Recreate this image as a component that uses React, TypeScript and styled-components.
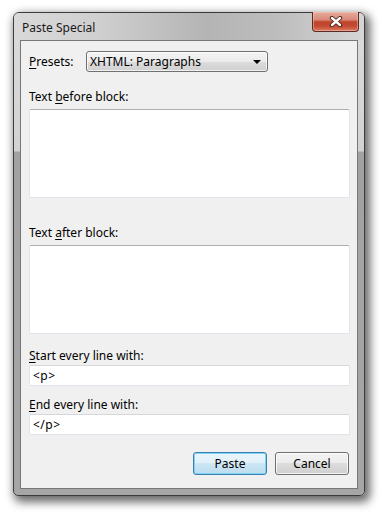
import React from "react";
import { styled, createGlobalStyle } from "styled-components";

const GlobalStyle = createGlobalStyle`
  body {
    margin: 0;
    background: #ffffff;
    font-family: "Noto Sans", "Open Sans", sans-serif;
  }
`;

const Page = styled.div`
  padding: 12px 0 0 13px;
  height: 515px;
  box-sizing: border-box;
`;

const Window = styled.div`
  width: 352px;
  height: 484px;
  box-sizing: border-box;
  border: 1px solid #3c3c3c;
  border-radius: 6px 6px 5px 5px;
  display: flex;
  flex-direction: column;
  background: linear-gradient(to bottom, #dcdcdc 0px, #d2d2d2 138px, #a2a2a2 139px, #a6a6a6 100%);
  box-shadow: 3px 4px 10px 2px rgba(0, 0, 0, 0.6);
`;

const TitleBar = styled.div`
  height: 27px;
  flex: none;
  display: flex;
  align-items: flex-start;
  justify-content: space-between;
  padding: 0 5px 0 8px;
  border-radius: 5px 5px 0 0;
  background: linear-gradient(
    to right,
    #d9d9d9 0%,
    #cfcfcf 25%,
    #b4b4b4 55%,
    #bdbdbd 75%,
    #cbcbcb 90%,
    #d6d6d6 100%
  );
`;

const Title = styled.span`
  font-size: 12px;
  line-height: 16px;
  margin-top: 7px;
  color: #1a1a1a;
`;

const CloseButton = styled.div`
  width: 47px;
  height: 20px;
  margin-top: -1px;
  box-sizing: border-box;
  border: 1px solid #5a2a24;
  border-top: none;
  border-radius: 0 0 4px 4px;
  display: flex;
  align-items: center;
  justify-content: center;
  background: linear-gradient(
    to bottom,
    #e6ab9c 0%,
    #d98a78 40%,
    #c1432d 52%,
    #c44a33 75%,
    #dc7c64 100%
  );
  box-shadow: inset 0 0 0 1px rgba(255, 210, 200, 0.45);
`;

const Client = styled.div`
  flex: 1;
  margin: 0 6px 6px;
  border: 1px solid #777777;
  background: #f0f0f0;
  padding: 10px 6px 0 8px;
  display: flex;
  flex-direction: column;
  color: #000000;
  font-size: 12px;
`;

const PresetRow = styled.div`
  display: flex;
  align-items: center;
  height: 21px;
`;

const Label = styled.div<{ $top: number; $bottom: number }>`
  line-height: 16px;
  height: 16px;
  margin-top: ${(p) => p.$top}px;
  margin-bottom: ${(p) => p.$bottom}px;
  white-space: nowrap;
`;

const PresetLabel = styled.span`
  width: 57px;
  line-height: 16px;
`;

const Key = styled.span`
  text-decoration: underline;
  text-underline-offset: 2px;
`;

const Combo = styled.div`
  width: 182px;
  height: 21px;
  box-sizing: border-box;
  border: 1px solid #707070;
  border-radius: 3px;
  display: flex;
  align-items: center;
  justify-content: space-between;
  padding: 0 6px 0 3px;
  background: linear-gradient(to bottom, #f3f3f3 0%, #ebebeb 50%, #dddddd 50%, #d0d0d0 100%);
  box-shadow: inset 0 0 0 1px rgba(255, 255, 255, 0.7);
`;

const Arrow = styled.span`
  width: 0;
  height: 0;
  border-left: 4px solid transparent;
  border-right: 4px solid transparent;
  border-top: 4px solid #000000;
`;

const TextArea = styled.textarea`
  display: block;
  width: 321px;
  height: 89px;
  box-sizing: border-box;
  margin: 0;
  resize: none;
  border: 1px solid #e2e3ea;
  border-top-color: #abadb3;
  border-radius: 2px;
  background: #ffffff;
  outline: none;
`;

const LineInput = styled.input`
  display: block;
  width: 321px;
  height: 21px;
  box-sizing: border-box;
  margin: 0;
  padding: 0 3px;
  border: 1px solid #e2e3ea;
  border-top-color: #d5d7dc;
  border-radius: 2px;
  background: #ffffff;
  font-family: "Noto Sans", "Open Sans", sans-serif;
  font-size: 12px;
  letter-spacing: 0.5px;
  color: #000000;
  outline: none;
`;

const ButtonRow = styled.div`
  display: flex;
  justify-content: flex-end;
  gap: 8px;
  margin-top: 17px;
  padding-right: 2px;
`;

const Button = styled.button<{ $default?: boolean }>`
  width: 74px;
  height: 23px;
  box-sizing: border-box;
  border-radius: 3px;
  font-family: "Noto Sans", "Open Sans", sans-serif;
  font-size: 12px;
  color: #000000;
  padding: 0;
  border: 1px solid ${(p) => (p.$default ? "#3c7fb1" : "#707070")};
  background: ${(p) =>
    p.$default
      ? "linear-gradient(to bottom, #ecf6fb 0%, #e0f0f9 50%, #cde6f4 50%, #bcdcee 100%)"
      : "linear-gradient(to bottom, #f3f3f3 0%, #ebebeb 50%, #dddddd 50%, #cfcfcf 100%)"};
  box-shadow: ${(p) =>
    p.$default
      ? "inset 0 0 0 1px #7fd3f7"
      : "inset 0 0 0 1px rgba(255, 255, 255, 0.75)"};
`;

const CloseGlyph = () => (
  <svg width="14" height="11" viewBox="0 0 14 11">
    <path d="M3 2 L11 9 M11 2 L3 9" stroke="#4a1e18" strokeWidth="4.2" strokeLinecap="round" />
    <path d="M3 2 L11 9 M11 2 L3 9" stroke="#ffffff" strokeWidth="2.4" strokeLinecap="round" />
  </svg>
);

export default function App() {
  return (
    <>
      <GlobalStyle />
      <Page>
        <Window>
          <TitleBar>
            <Title>Paste Special</Title>
            <CloseButton>
              <CloseGlyph />
            </CloseButton>
          </TitleBar>
          <Client>
            <PresetRow>
              <PresetLabel>
                <Key>P</Key>resets:
              </PresetLabel>
              <Combo>
                <span>XHTML: Paragraphs</span>
                <Arrow />
              </Combo>
            </PresetRow>
            <Label $top={17} $bottom={4}>
              Text <Key>b</Key>efore block:
            </Label>
            <TextArea readOnly />
            <Label $top={27} $bottom={4}>
              Text <Key>a</Key>fter block:
            </Label>
            <TextArea readOnly />
            <Label $top={14} $bottom={1}>
              <Key>S</Key>tart every line with:
            </Label>
            <LineInput readOnly defaultValue="<p>" />
            <Label $top={11} $bottom={1}>
              <Key>E</Key>nd every line with:
            </Label>
            <LineInput readOnly defaultValue="</p>" />
            <ButtonRow>
              <Button $default>Paste</Button>
              <Button>Cancel</Button>
            </ButtonRow>
          </Client>
        </Window>
      </Page>
    </>
  );
}
